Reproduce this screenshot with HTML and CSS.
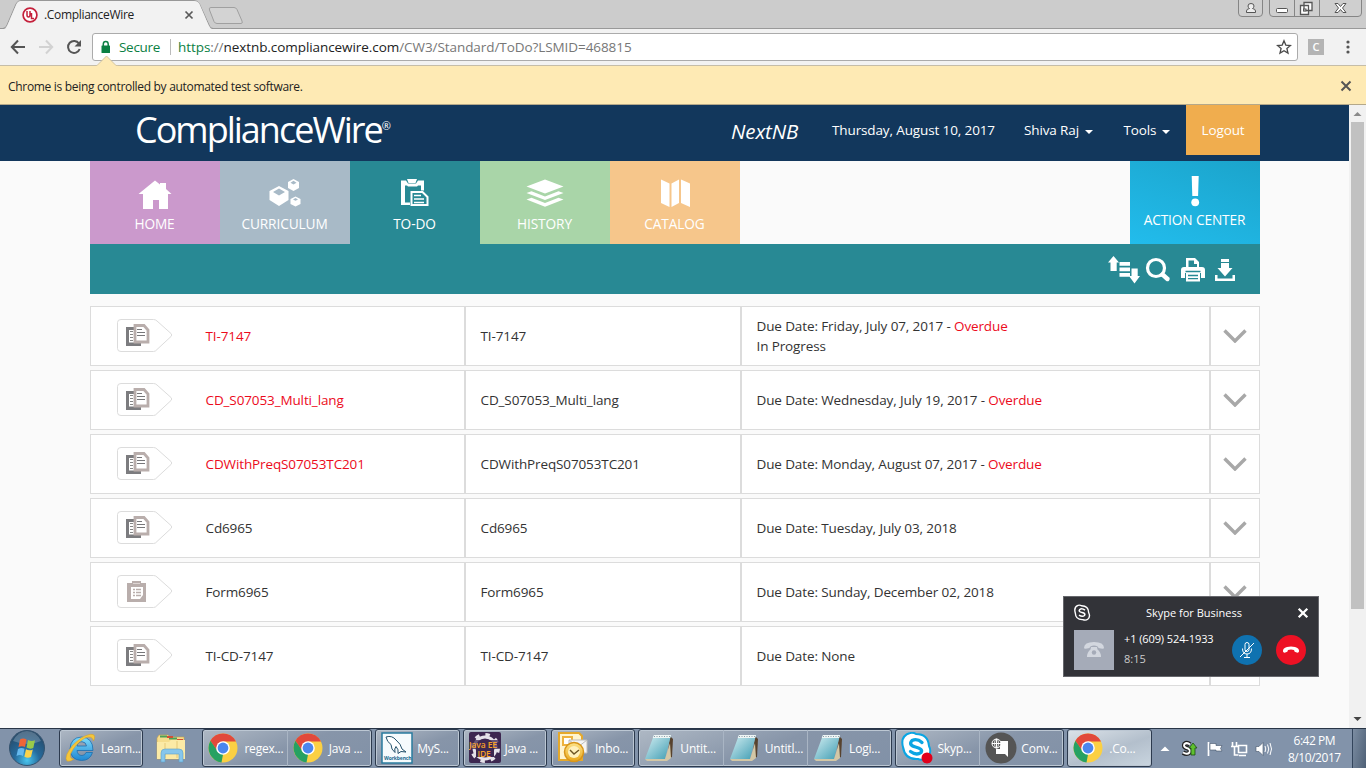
FILE: index.html
```html
<!DOCTYPE html>
<html lang="en">
<head>
<meta charset="utf-8">
<title>.ComplianceWire</title>
<link rel="stylesheet" href="styles.css">
</head>
<body>
<svg class="defs" aria-hidden="true">
  <defs>
    <linearGradient id="g-note" x1="0" y1="0" x2="1" y2="1"><stop offset="0" stop-color="#d8f1f4"/><stop offset="1" stop-color="#3e9cb2"/></linearGradient>
    <linearGradient id="g-ie" x1="0" y1="0" x2="0" y2="1"><stop offset="0" stop-color="#7fdcfb"/><stop offset="1" stop-color="#1f87d2"/></linearGradient>
    <radialGradient id="g-orb" cx=".5" cy=".85" r=".8"><stop offset="0" stop-color="#49c5ee"/><stop offset=".45" stop-color="#256a9c"/><stop offset="1" stop-color="#274a68"/></radialGradient>
    <linearGradient id="g-gold" x1="0" y1="0" x2="0" y2="1"><stop offset="0" stop-color="#fde48a"/><stop offset="1" stop-color="#e9a71c"/></linearGradient>
    <symbol id="docs" viewBox="0 0 56 34">
      <path d="M4 .5H36.500Q38.500 .5 40 2L54 14.500Q55.500 16 54 17.500L40 30.500Q38.500 32.500 36.500 32.500H4Q.5 32.500 .5 29.500V3.500Q.5 .5 4 .5Z" fill="#fff" stroke="#dcdcdc"/>
      <path d="M9 8h8v3h-5v12.500h9v-1h3v4.500H9z" fill="#7c7c7f"/>
      <path d="M13 12.500h3M13 15.500h3M13 18.500h3M13 21.500h3" stroke="#858585"/>
      <path d="M18 6.500h9l4 4.500v12H18z" fill="#fff" stroke="#b9aeac" stroke-width="2.800"/>
      <path d="M20 10.500h5M20 13.500h8M20 16.500h8" stroke="#77777a" stroke-width="1.200"/>
    </symbol>
    <symbol id="form" viewBox="0 0 56 34">
      <path d="M4 .5H36.500Q38.500 .5 40 2L54 14.500Q55.500 16 54 17.500L40 30.500Q38.500 32.500 36.500 32.500H4Q.5 32.500 .5 29.500V3.500Q.5 .5 4 .5Z" fill="#fff" stroke="#dcdcdc"/>
      <path d="M10 8h5V6h9v2h5v19H10z" fill="#b9aeac"/><path d="M14 12h12v8l-3 4h-9z" fill="#fff"/>
      <path d="M16 14.500h2m1 0h5M16 17.500h2m1 0h5M16 20.500h2m1 0h5" stroke="#b9aeac" stroke-width="1.600"/><path d="M16 8.500h7" stroke="#ddd5d3"/>
    </symbol>
    <symbol id="chev" viewBox="0 0 24 14"><path d="M1.500 1.500L12 12 22.500 1.500" fill="none" stroke="#a8a8a8" stroke-width="3.400"/></symbol>
    <symbol id="chrome" viewBox="0 0 30 30">
      <circle cx="15" cy="15" r="14.500" fill="#fbd043"/>
      <path d="M15 15L2.440 7.750A14.500 14.500 0 0 1 27.560 7.750L28 8.500H15z" fill="#e1493b"/>
      <path d="M2.440 7.750L9.400 18.300 15 21.500 13.500 29.400A14.500 14.500 0 0 1 2.440 7.750z" fill="#26a162"/>
      <path d="M2.440 7.750L9.400 18.300 12 10z" fill="#e1493b"/><path d="M2.440 7.750L9.400 18.300 15 21.500 9 21z" fill="#26a162"/>
      <circle cx="15" cy="15" r="6.800" fill="#fff"/><circle cx="15" cy="15" r="5.400" fill="#4a86ee"/>
    </symbol>
    <symbol id="notepad" viewBox="0 0 30 30">
      <path d="M26 3l3 3-1 18-5 2z" fill="#57422e"/><path d="M10 2h17l-6 24H1z" fill="url(#g-note)"/><path d="M10 2h17l-.8 3H8.700z" fill="#eef5f5"/>
      <path d="M10 3.500h17" stroke="#8d9ea6" stroke-dasharray="1 1.500"/><path d="M1 26h20l5-16 1 15-4 3H3z" fill="#d3c7a6"/>
    </symbol>
  </defs>
</svg>

<header class="tabstrip">
  <svg class="tabshape" width="250" height="29" viewBox="0 0 250 29">
    <path d="M0 28.500H3Q6 28 7 25L16 4Q17.500 .5 21 .5H194Q198 .5 199.500 4L209 25Q210 28.500 213 28.500H250" fill="none" stroke="#989898"/>
    <path d="M4 29Q6.500 28 7.500 25L16.500 4Q18 1 21 1H194Q198 1 199.500 4L208.500 25Q210 28.500 212 29z" fill="#f2f2f2"/>
    <path d="M211 7.500H234Q236 7.500 237 9.500L242 21Q243 23.500 241 23.500H217Q215 23.500 214 21.500L209.500 10Q208.500 7.500 211 7.500Z" fill="#d3d3d3" stroke="#a0a0a0"/>
    <circle cx="30" cy="15" r="6.900" fill="#fff" stroke="#c4203b" stroke-width="1.700"/>
    <path d="M27 11v4q0 2 1.500 2t1.500-2v-4M31.500 13v5.500H34" fill="none" stroke="#c4203b" stroke-width="1.500"/>
    <path d="M185.500 11.500l7 7m0-7l-7 7" stroke="#5a5a5a" stroke-width="1.700"/>
  </svg>
  <span class="tabtitle">.ComplianceWire</span>
  <svg class="winbtns" width="128" height="29" viewBox="0 0 128 29">
    <path d="M.5 -1V13Q.5 16.500 4 16.500H21Q24.500 16.500 24.500 13V-1M31.500 -1V13Q31.500 16.500 35 16.500H120Q123.500 16.500 123.500 13V-1M56.500 0V16M81.500 0V16" fill="#cfcfcf" stroke="#858585"/>
    <path d="M8.500 12.500v-1.500q0-2 3-2.500-1.500-1-1.500-2.500 0-2.500 3-2.500t3 2.500q0 1.500-1.500 2.500 3 .5 3 2.500v1.500z" fill="#eee" stroke="#555"/>
    <rect x="38.500" y="8.500" width="11" height="4" rx="1" fill="#fff" stroke="#555"/>
    <path d="M66 2.500h8v8h-8zM62.500 5.500h8v9h-8z" fill="#fff" stroke="#555" stroke-width="1.300"/><rect x="65.500" y="9" width="2.500" height="2" fill="#ccc" stroke="#555"/>
    <path d="M97 3.500h3l2.500 3 2.500-3h3l-3.500 4.500 3.500 4.500h-3l-2.500-3-2.500 3h-3l3.500-4.500z" fill="#fff" stroke="#555"/>
  </svg>
</header>

<div class="toolbar">
  <svg width="92" height="36" viewBox="0 0 92 36">
    <path d="M25 18H12M18 11.500L11.800 18l6.200 6.500" fill="none" stroke="#555" stroke-width="2"/>
    <path d="M39 18H52M46 11.500l6.200 6.500-6.200 6.500" fill="none" stroke="#d2d2d2" stroke-width="2"/>
    <path d="M79 14.500A6 6 0 1 0 79.700 20" fill="none" stroke="#555" stroke-width="2"/><path d="M81 11v6.500h-6.500z" fill="#555"/>
  </svg>
  <div class="omnibox">
    <svg width="12" height="14" viewBox="0 0 12 14"><rect x="1.500" y="5.500" width="8.500" height="7.500" rx=".5" fill="#0b8043"/><path d="M3.300 6V4a2.450 2.600 0 0 1 4.900 0v2" fill="none" stroke="#0b8043" stroke-width="1.500"/></svg>
    <span class="secure">Secure</span><span class="divider"></span>
    <span class="url"><span class="green">https</span><span class="grey">://</span>nextnb.compliancewire.com<span class="grey">/CW3/Standard/ToDo?LSMID=468815</span></span>
    <svg class="star" width="16" height="16" viewBox="0 0 16 16"><path d="M8 1.800l1.800 4.300 4.700.4-3.600 3 1.100 4.600L8 11.700l-4 2.400 1.100-4.600-3.600-3 4.700-.4z" fill="none" stroke="#4a4a4a" stroke-width="1.300"/></svg>
  </div>
  <span class="ext">C</span>
  <svg class="dots" width="6" height="16" viewBox="0 0 6 16"><g fill="#555"><circle cx="3" cy="3" r="1.600"/><circle cx="3" cy="8" r="1.600"/><circle cx="3" cy="13" r="1.600"/></g></svg>
</div>

<div class="infobar">
  <svg class="notch" width="22" height="11" viewBox="0 0 22 11"><path d="M0 10.500H1L10.500 1 20 10.500h2" fill="#feeab4" stroke="#d2c4a0"/><path d="M1.500 10.500h18" stroke="#feeab4"/></svg>
  <span>Chrome is being controlled by automated test software.</span>
  <svg width="12" height="12" viewBox="0 0 12 12"><path d="M1.500 1.500l9 9m0-9l-9 9" stroke="#555" stroke-width="2"/></svg>
</div>

<div class="viewport">
<main class="page">
  <nav class="navbar">
    <div class="brand">ComplianceWire<sup>®</sup></div>
    <div class="org">NextNB</div>
    <div class="date">Thursday, August 10, 2017</div>
    <div class="user">Shiva Raj<i class="caret"></i></div>
    <div class="tools">Tools<i class="caret"></i></div>
    <div class="logout">Logout</div>
  </nav>
  <div class="tiles">
    <div class="tile home"><svg width="36" height="32" viewBox="0 0 36 32"><path d="M18 1.500l5 4V4h6v6l5.500 5H31v15h-9v-9h-6v9H6V15H1.500z" fill="#fff"/></svg><span>HOME</span></div>
    <div class="tile curr"><svg width="36" height="32" viewBox="0 0 36 32"><g fill="#fff"><path d="M12 7l9.500 5v9L12 27l-9.500-6v-9zM26.500 0l5.500 3v6l-5.500 3L21 9V3zM28.500 17.500l5 2.500v5l-5 2.500-5-2.500v-5z"/></g><g fill="#a8bac7"><path d="M12 9.500l6 3.500-6 3.500L6 13zM26.500 1.800l3 2-3 1.800-3-1.800zM28.500 19l2.500 1.500-2.500 1.300-2.500-1.300z"/></g></svg><span>CURRICULUM</span></div>
    <div class="tile todo"><svg width="36" height="32" viewBox="0 0 36 32"><path d="M4 1.500h5l2 3h8l2-3h6v10h-3V6.500h-3l-1 1h-9l-1-1H8v17h5V26H4z" fill="#fff"/><path d="M10 0h10l-1.500 4h-7z" fill="#fff"/><path d="M14.500 13h11l5 5v8h-16z" fill="#288994" stroke="#fff" stroke-width="2"/><path d="M17 16.500h7M17 20h10M17 23.500h10" stroke="#fff" stroke-width="1.500"/></svg><span>TO-DO</span></div>
    <div class="tile hist"><svg width="40" height="32" viewBox="0 0 40 32"><g fill="#fff"><path d="M20 .5l18.500 7L20 14.500 1.500 7.500zM1.500 14l5-1.800L20 17.500l13.500-5.300 5 1.800L20 21zM1.500 20.500l5-1.800L20 24l13.500-5.300 5 1.800L20 27.800z"/></g></svg><span>HISTORY</span></div>
    <div class="tile cata"><svg width="36" height="32" viewBox="0 0 36 32"><path d="M4 .5l8.500 4V28L4 24zM14.500 4.500L22 .5V24l-7.500 4zM24 .5l9 4V28l-9-4z" fill="#fff"/></svg><span>CATALOG</span></div>
    <div class="tile action"><svg width="20" height="32" viewBox="0 0 20 32"><path d="M6.700 1h7l-.6 20H7.300z" fill="#fff"/><circle cx="10.200" cy="27.300" r="3.900" fill="#fff"/></svg><span>ACTION CENTER</span></div>
  </div>
  <div class="band">
    <svg width="32" height="28" viewBox="0 0 32 28"><g fill="#fff"><path d="M5.500 0l5.500 6.500H8.700V15H2.500V6.500H0zM11.500 6H22v3.800H11.500zM11.500 11.500H22v3.800H11.500zM11.500 17H22v3.800H11.500zM23.500 12.500h6.200v7.500H32L26.500 27.500 21 20h2.500z"/></g></svg>
    <svg width="26" height="26" viewBox="0 0 26 26"><circle cx="11" cy="11" r="8.500" fill="none" stroke="#fff" stroke-width="3.200"/><path d="M17.500 17.500l5 4.500" stroke="#fff" stroke-width="4.400" stroke-linecap="round"/></svg>
    <svg width="24" height="26" viewBox="0 0 24 26"><path d="M5 10V1h9l4 4v5z" fill="#fff"/><path d="M7.500 10V3.500H13V7h3v3z" fill="#288994"/><path d="M0 13q0-3 3-3h18q3 0 3 3v8h-4v-5H4v5H0z" fill="#fff"/><path d="M5 16h14v8.500H5z" fill="#fff"/><path d="M4.500 14.500h15" stroke="#288994" stroke-width="1.500"/><path d="M7 18.500h10M7 21.700h10" stroke="#288994" stroke-width="1.300"/></svg>
    <svg width="22" height="24" viewBox="0 0 22 24"><path d="M7 1h8v3H7zM7 5h8v5h3.500L11 18.500 3.500 10H7zM1 17h2.500v3.500h15V17H21v6H1z" fill="#fff"/></svg>
  </div>
  <div class="list">
    <div class="row overdue"><div class="c1"><svg class="kind"><use href="#docs"/></svg><span>TI-7147</span></div><div class="c2"><span>TI-7147</span></div><div class="c3"><span>Due Date: Friday, July 07, 2017 - <b>Overdue</b><br>In Progress</span></div><div class="c4"><svg class="chev"><use href="#chev"/></svg></div></div>
    <div class="row overdue"><div class="c1"><svg class="kind"><use href="#docs"/></svg><span>CD_S07053_Multi_lang</span></div><div class="c2"><span>CD_S07053_Multi_lang</span></div><div class="c3"><span>Due Date: Wednesday, July 19, 2017 - <b>Overdue</b></span></div><div class="c4"><svg class="chev"><use href="#chev"/></svg></div></div>
    <div class="row overdue"><div class="c1"><svg class="kind"><use href="#docs"/></svg><span>CDWithPreqS07053TC201</span></div><div class="c2"><span>CDWithPreqS07053TC201</span></div><div class="c3"><span>Due Date: Monday, August 07, 2017 - <b>Overdue</b></span></div><div class="c4"><svg class="chev"><use href="#chev"/></svg></div></div>
    <div class="row"><div class="c1"><svg class="kind"><use href="#docs"/></svg><span>Cd6965</span></div><div class="c2"><span>Cd6965</span></div><div class="c3"><span>Due Date: Tuesday, July 03, 2018</span></div><div class="c4"><svg class="chev"><use href="#chev"/></svg></div></div>
    <div class="row"><div class="c1"><svg class="kind"><use href="#form"/></svg><span>Form6965</span></div><div class="c2"><span>Form6965</span></div><div class="c3"><span>Due Date: Sunday, December 02, 2018</span></div><div class="c4"><svg class="chev"><use href="#chev"/></svg></div></div>
    <div class="row"><div class="c1"><svg class="kind"><use href="#docs"/></svg><span>TI-CD-7147</span></div><div class="c2"><span>TI-CD-7147</span></div><div class="c3"><span>Due Date: None</span></div><div class="c4"><svg class="chev"><use href="#chev"/></svg></div></div>
  </div>
</main>
<div class="scroll"><svg width="13" height="17" viewBox="0 0 13 17"><path d="M2.500 11L6.500 7l4 4z" fill="#8a8a8a"/></svg><div class="thumb"></div><svg width="13" height="17" viewBox="0 0 13 17"><path d="M2.500 6L6.500 10l4-4z" fill="#444"/></svg></div>
</div>

<aside class="skype">
  <div class="sk-head">
    <svg width="18" height="18" viewBox="0 0 18 18"><path d="M5 1.300q2-.6 3.500.5 7 0 7.200 7 2 4-1 6.500-2 1.500-5 .3-7 .3-7.400-6.600Q.5 3 5 1.300z" fill="none" stroke="#fff" stroke-width="1.400"/><path d="M12 6.200Q8.800 3.800 6.800 5.500 5 7.700 9 8.500q4 .8 2.400 3-2 1.800-5.400-.4" fill="none" stroke="#fff" stroke-width="1.600"/></svg>
    <span>Skype for Business</span>
    <svg width="12" height="12" viewBox="0 0 12 12"><path d="M1.700 1.700l8.600 8.600m0-8.600l-8.600 8.600" stroke="#fff" stroke-width="2.300"/></svg>
  </div>
  <div class="sk-body">
    <div class="avatar"><svg width="22" height="18" viewBox="0 0 22 18"><path d="M1 7q0-6 10-6t10 6q0 1.500-5.500 0Q15 4.500 11 4.500T6.500 7Q1 8.500 1 7zM8 6h6l.5 2.500Q18 11 18 16H4q0-5 3.500-7.500z" fill="#d3d7df"/><circle cx="11" cy="11.500" r="2.200" fill="#a5abb8"/></svg></div>
    <div class="sk-text"><span class="num">+1 (609) 524-1933</span><span class="dur">8:15</span></div>
    <svg class="mute" width="30" height="30" viewBox="0 0 30 30"><circle cx="15" cy="15" r="15" fill="#0f72b0"/><path d="M13 9.500q0-2 2-2t2 2v5q0 2-2 2t-2-2zM10.500 13.500q0 5.500 4.500 5.500t4.500-5.500M15 19v3M12 22.500h6M8 22L22 8" fill="none" stroke="#fff"/></svg>
    <svg width="30" height="30" viewBox="0 0 30 30"><circle cx="15" cy="15" r="15" fill="#ed1124"/><path d="M7 16.500Q6.500 13 11 12q4-1 8 0 4.500 1 4 4.500-.3 1.500-2.300 1-2.700-.5-2.700-2.500-3-1-6 0 0 2-2.700 2.500-2 .5-2.300-1z" fill="#fff"/></svg>
  </div>
</aside>

<footer class="taskbar">
  <svg class="orb" width="38" height="38" viewBox="0 0 38 38"><circle cx="19" cy="19" r="17.500" fill="url(#g-orb)" stroke="#34526e"/><path d="M5 12Q10 2 19 2T33 12Q20 18 5 12z" fill="#a9bdcd" opacity=".35"/><path d="M12 10.500q3-2 6.500 0l-1.500 7.500q-3-1.500-6.500 0z" fill="#ef6637"/><path d="M20 11q3.500 2 7 .3L25.300 19q-3.500 1.500-6.800-.5z" fill="#9acb4a"/><path d="M10 20q3.300-2 6.500-.2L15 27q-3.300-1.800-6.500 0z" fill="#65b9ee"/><path d="M18 20.300q3.300 2 6.800.2L23 28q-3.300 1.600-6.600-.3z" fill="#fbd34b"/></svg>
  <div class="grp g-learn"><div class="btn"><svg width="32" height="32" viewBox="0 0 32 32"><path d="M27.500 20.500Q25 28.500 16.500 28.500 5.500 28 5 17 5.500 5.500 16.500 5 28 5.500 28 18.500H12q.5 5 5 5 3 0 4-3zM12 14h9.500q-.5-4-4.500-4.300-4 0-5 4.300z" fill="url(#g-ie)" stroke="#1d6fae" stroke-width=".8"/><path d="M28.500 9Q31 3.500 28 2.500 24 1.500 16 6 6 13 2 22q-2 5 0 7 3 1 7-2Q4.500 27 5.500 22 10 12 20 6 27 3 28.500 9z" fill="#f5c63b" stroke="#d69e20" stroke-width=".5"/></svg><span>Learn...</span></div></div>
  <svg class="explorer" width="32" height="30" viewBox="0 0 32 30"><path d="M1 5l2-3h9l2 2h14v22H1z" fill="#f5dd8c" stroke="#c6a24c" stroke-width=".6"/><path d="M4 3.500h7M13 5.500h8" stroke="#4c9e58" stroke-width="2"/><path d="M11 4h6M21 7h6" stroke="#d54e34" stroke-width="2"/><path d="M1 9h12l2-2h14v19H1z" fill="#fbeaa6"/><path d="M9 10v15M21 8v17" stroke="#e4c876"/><path d="M5 29V20q0-4 4-4h14q4 0 4 4v9h-4v-8H9v8z" fill="#86c6ec" stroke="#5c9fca" stroke-width=".6"/></svg>
  <div class="grp g-chrome"><div class="btn"><svg class="i30"><use href="#chrome"/></svg><span>regex...</span></div><div class="btn"><svg class="i30"><use href="#chrome"/></svg><span>Java ...</span></div></div>
  <div class="grp g-sql"><div class="btn"><svg width="32" height="32" viewBox="0 0 32 32"><rect x="1" y="1" width="30" height="30" fill="#f5fafc" stroke="#287b9e" stroke-width="1.500"/><path d="M5 5q6-2 10 3 5 4 6 9l4 3-5-.5-3 2q1-4-2-7-2 2-1 6-4-3-4-8Q6 10 5 5z" fill="#fff" stroke="#24516b"/><text x="3" y="28" class="wb">Workbench</text></svg><span>MyS...</span></div></div>
  <div class="grp g-java"><div class="btn"><svg width="32" height="32" viewBox="0 0 32 32"><rect width="32" height="31" rx="2" fill="#3d2750"/><circle cx="16" cy="16" r="11" fill="none" stroke="#e5e2e9" stroke-width="3"/><circle cx="16" cy="16" r="13.500" fill="none" stroke="#e5e2e9" stroke-width="3" stroke-dasharray="4.500 6.100"/><rect y="8" width="32" height="9" fill="#3d2750" opacity=".75"/><rect x="7" y="16" width="18" height="9" fill="#3d2750"/><text x="0" y="16" class="jee">Java EE</text><text x="8.500" y="25" class="jee">IDE</text></svg><span>Java ...</span></div></div>
  <div class="grp g-mail"><div class="btn"><svg width="34" height="32" viewBox="0 0 34 32"><path d="M2 1h20l3 3v24H2z" fill="#fff4cf" stroke="#e5a92c" stroke-width="2"/><rect x="6" y="5" width="9" height="8" fill="#fff" stroke="#eeb23e" stroke-width="2"/><path d="M12 8h18v13H12z" fill="#f4f4f4" stroke="#bbb"/><path d="M12 8l9 7 9-7" fill="none" stroke="#bbb"/><circle cx="17" cy="20" r="9.500" fill="url(#g-gold)" stroke="#d8951a" stroke-width="1.500"/><circle cx="17" cy="20" r="6" fill="#fff1bd"/><path d="M13 18l4 4 5-4" fill="none" stroke="#6d5525" stroke-width="1.400"/></svg><span>Inbo...</span></div></div>
  <div class="grp g-note"><div class="btn"><svg class="i30"><use href="#notepad"/></svg><span>Untit...</span></div><div class="btn"><svg class="i30"><use href="#notepad"/></svg><span>Untitl...</span></div><div class="btn"><svg class="i30"><use href="#notepad"/></svg><span>Logi...</span></div></div>
  <div class="grp g-skype"><div class="btn"><svg width="32" height="32" viewBox="0 0 32 32"><path d="M9 1q3-1 6 1 12 0 13 12 3 6-1 11-5 4-10 2Q4 28 2 15-1 4 9 1z" fill="#fff" stroke="#0aa5e3" stroke-width="2"/><path d="M21 10.500q-5-4.500-10-2-4 4.500 3.500 6.500Q22.500 17 20 20.500q-4.500 3.500-10.500-1" fill="none" stroke="#0aa5e3" stroke-width="3.300" stroke-linecap="round"/><circle cx="26" cy="26" r="5.500" fill="#e0001b"/></svg><span>Skyp...</span></div><div class="btn"><svg width="32" height="32" viewBox="0 0 32 32"><circle cx="16" cy="16" r="15.500" fill="#555"/><path d="M15 9h8v16l-3-3h-9v-5h4z" fill="#fff"/><circle cx="11.500" cy="11.500" r="4.500" fill="#555" stroke="#fff"/><path d="M7 11.500h9M11.500 7v9" stroke="#fff"/><ellipse cx="11.500" cy="11.500" rx="2" ry="4.500" fill="none" stroke="#fff" stroke-width=".8"/></svg><span>Conv...</span></div></div>
  <div class="grp g-co"><div class="btn"><svg class="i30"><use href="#chrome"/></svg><span>.Co...</span></div></div>
  <svg class="tray" width="112" height="24" viewBox="0 0 112 24">
    <path d="M.5 14L5 9.500 9.500 14z" fill="#fff"/>
    <path d="M30 7.500q-3-2.500-5.500-.5-1.500 2.800 2 4 4.500 1 3 4.500-2.500 2.500-6.500 0" fill="none" stroke="#222" stroke-width="4.500"/><path d="M30 7.500q-3-2.500-5.500-.5-1.500 2.800 2 4 4.500 1 3 4.500-2.500 2.500-6.500 0" fill="none" stroke="#fff" stroke-width="2"/><path d="M31 18V11h-2l4-5 4 5h-2v7z" fill="#5ec02f" stroke="#1c4d14" stroke-width=".8"/>
    <path d="M48.500 5v14" stroke="#fff" stroke-width="1.700"/><path d="M50 6.500h6v2h6l-1.500 3 1.500 2.500h-6V13h-6z" fill="#fff" stroke="#43546a" stroke-width=".6"/>
    <path d="M78.500 8.500h8v7h-8zM79 18.500h7M72.500 5v4M76.500 5v4M71 9.500h7M74.500 10v8h4" fill="none" stroke="#fff" stroke-width="1.600"/>
    <path d="M96 9.500h3l4-4v13l-4-4h-3z" fill="#fff" stroke="#43546a" stroke-width=".6"/><path d="M105 9q1.500 3 0 6M107.500 7.500q2.500 4.500 0 9M110 6q3 6 0 12" fill="none" stroke="#fff"/>
  </svg>
  <div class="clock"><span>6:42 PM</span><span>8/10/2017</span></div>
  <div class="peek"></div>
</footer>
</body>
</html>
```
FILE: styles.css
```css
* { box-sizing: border-box; }
body { margin: 0; width: 1366px; height: 768px; overflow: hidden; display: flex; flex-direction: column; position: relative; font-family: "Open Sans", "Noto Sans", sans-serif; font-size: 13.5px; letter-spacing: -.12px; color: #333; background: #fafafa; }
svg { display: block; flex: none; }
.defs { position: absolute; width: 0; height: 0; }
.green { color: #0b8043; }
.grey { color: #777; }

.tabstrip { height: 29px; flex: none; display: flex; background: #ccc; border-bottom: 1px solid #999; position: relative; }
.tabshape { height: 29px; margin-bottom: -1px; z-index: 1; }
.tabtitle { position: absolute; left: 44px; top: 6px; font-size: 12px; line-height: 17px; letter-spacing: -.32px; color: #222; z-index: 2; }
.winbtns { margin-left: auto; }

.toolbar { height: 37px; flex: none; display: flex; align-items: center; background: #f2f2f2; border-bottom: 1px solid #c5bda8; }
.omnibox { width: 1206px; height: 28px; display: flex; align-items: center; background: #fff; border: 1px solid #ababab; border-radius: 3px; padding-left: 7px; letter-spacing: -.07px; }
.secure { color: #0b8043; margin-left: 7px; width: 43px; letter-spacing: -.3px; white-space: nowrap; }
.divider { width: 1px; height: 16px; background: #bbb; margin: 0 7px 0 8px; }
.url { color: #222; white-space: nowrap; }
.star { margin-left: auto; margin-right: 5px; }
.ext { width: 16px; height: 16px; margin-left: 10px; background: #b4b4b4; color: #fff; font-size: 11px; font-weight: 600; line-height: 16px; text-align: center; }
.dots { margin-left: 21px; }

.infobar { height: 39px; flex: none; display: flex; justify-content: space-between; align-items: center; padding: 2px 14px 0 8px; background: #feeab4; position: relative; font-size: 12px; letter-spacing: -.31px; color: #222; border-bottom: 1px solid #b4a88a; }
.notch { position: absolute; left: 96px; top: -11px; }

.viewport { height: 623px; flex: none; display: flex; }
.page { width: 1349px; background: #fafafa; }
.navbar { height: 56px; display: flex; background: #12375c; color: #fff; line-height: 50px; white-space: nowrap; }
.brand { width: 596px; padding-left: 135px; font-size: 36px; letter-spacing: -2px; line-height: 49px; }
.brand sup { font-size: 11px; line-height: 0; vertical-align: 13px; }
.org { margin-left: 135px; width: 101px; font-size: 20.5px; font-style: italic; line-height: 53px; }
.date { width: 192px; }
.user { width: 99.5px; }
.tools { width: 62.5px; }
.caret { display: inline-block; margin-left: 6px; vertical-align: 1px; border: 4px solid transparent; border-top-color: #fff; border-bottom: 0; }
.logout { width: 74px; height: 50px; background: #f0ad4e; text-align: center; }

.tiles { width: 1170px; margin: 0 auto 0 90px; height: 83px; display: flex; }
.tile { width: 130px; display: flex; flex-direction: column; align-items: center; padding: 18px 1px 0 0; color: #fff; font-size: 13.7px; line-height: 20px; white-space: nowrap; }
.tile span { margin-top: 3px; }
.home { background: #cb99cc; }
.curr { background: #a8bac7; }
.todo { background: #288994; }
.hist { background: #a9d5a8; }
.cata { background: #f6c68b; }
.action { margin-left: auto; padding-top: 14px; background: linear-gradient(20deg, #22bcec, #1ba4cb); }
.action span { margin-top: 3px; }
.band { width: 1170px; height: 50px; margin-left: 90px; background: #288994; display: flex; align-items: center; justify-content: flex-end; padding: 2px 24px 0 0; }
.band svg:nth-child(2) { margin-left: 5px; }
.band svg:nth-child(3) { margin-left: 10px; }
.band svg:nth-child(4) { margin-left: 9px; }

.list { width: 1170px; margin: 12px 0 0 90px; display: flex; flex-direction: column; gap: 4px; }
.row { height: 60px; display: grid; grid-template-columns: 375px 276px 469px 50px; background: #fff; border: 1px solid #dcdcdc; white-space: nowrap; line-height: 20px; }
.row > div { display: flex; align-items: center; border-right: 2px solid #dcdcdc; }
.row > .c4 { border: 0; padding-left: 12px; }
.c1 svg { margin-left: 25.5px; width: 56px; height: 34px; }
.c1 span { margin-left: 33px; }
.c2, .c3 { padding-left: 14.5px; }
.chev { width: 24px; height: 14px; }
.row b { font-weight: 400; }
.overdue .c1 span, .row b { color: #ec0b1c; }

.scroll { width: 17px; padding: 0 2px; background: #f1f1f1; display: flex; flex-direction: column; }
.thumb { height: 487px; background: #c1c1c1; margin-bottom: auto; }

.skype { position: absolute; left: 1063px; top: 596px; width: 256px; height: 81px; background: #323338; border: 1px solid #66676c; color: #fff; font-size: 11px; letter-spacing: 0; }
.sk-head { display: flex; align-items: center; justify-content: space-between; height: 31px; padding: 0 9px; }
.sk-body { display: flex; align-items: center; padding: 2px 10px 0; }
.avatar { width: 40px; height: 40px; background: #a5abb8; display: flex; align-items: center; justify-content: center; }
.sk-text { display: flex; flex-direction: column; width: 108px; padding-left: 10px; line-height: 20px; margin-top: -2px; white-space: nowrap; }
.num { letter-spacing: -.1px; }
.dur { color: #ccc; }
.mute { margin: 0 14px 0 10px; }

.taskbar { height: 40px; flex: none; display: flex; background: #8293aa; border-top: 1px solid #283547; color: #fff; font-size: 12px; position: relative; }
.orb { margin-left: 8px; }
.grp { height: 38px; display: flex; border: 1px solid #2c3a4e; border-radius: 3px; box-shadow: inset 0 0 0 1px #bcc7d3; background: linear-gradient(160deg, #aeb8c4, #8795a9 50%, #8191a7); }
.btn { flex: 1; min-width: 0; display: flex; align-items: center; padding-left: 5px; white-space: nowrap; }
.btn + .btn { border-left: 1px solid #a9b5c4; }
.btn span { margin-left: 4px; letter-spacing: -.2px; }
.i30 { width: 30px; height: 30px; }
.i30 + span { margin-left: 6px; }
.g-learn { width: 85px; margin-left: 13px; }
.explorer { margin: 4px 14px 0 13px; }
.g-chrome { width: 171px; }
.g-sql { width: 85px; margin-left: 3px; }
.g-java { width: 85px; margin-left: 3px; }
.g-mail { width: 85px; margin-left: 4px; }
.g-note { width: 256px; margin-left: 3px; }
.g-skype { width: 170px; margin-left: 3px; }
.g-co { width: 85px; margin-left: 3px; background: linear-gradient(160deg, #dbe2e8, #b3bfcc 55%, #c9d5df); }
.wb { font-size: 5px; font-weight: 700; fill: #17678e; }
.jee { font-size: 8.5px; font-weight: 600; letter-spacing: -.1px; fill: #f6a127; }
.tray { margin: 8px 0 0 8px; }
.clock { width: 76px; display: flex; flex-direction: column; align-items: center; line-height: 17px; padding-top: 3px; margin-left: 5px; font-size: 12px; letter-spacing: -.45px; }
.peek { margin-left: auto; width: 14px; background: linear-gradient(100deg, #7c8da2, #4e6076); border-left: 1px solid #33455c; }
```
